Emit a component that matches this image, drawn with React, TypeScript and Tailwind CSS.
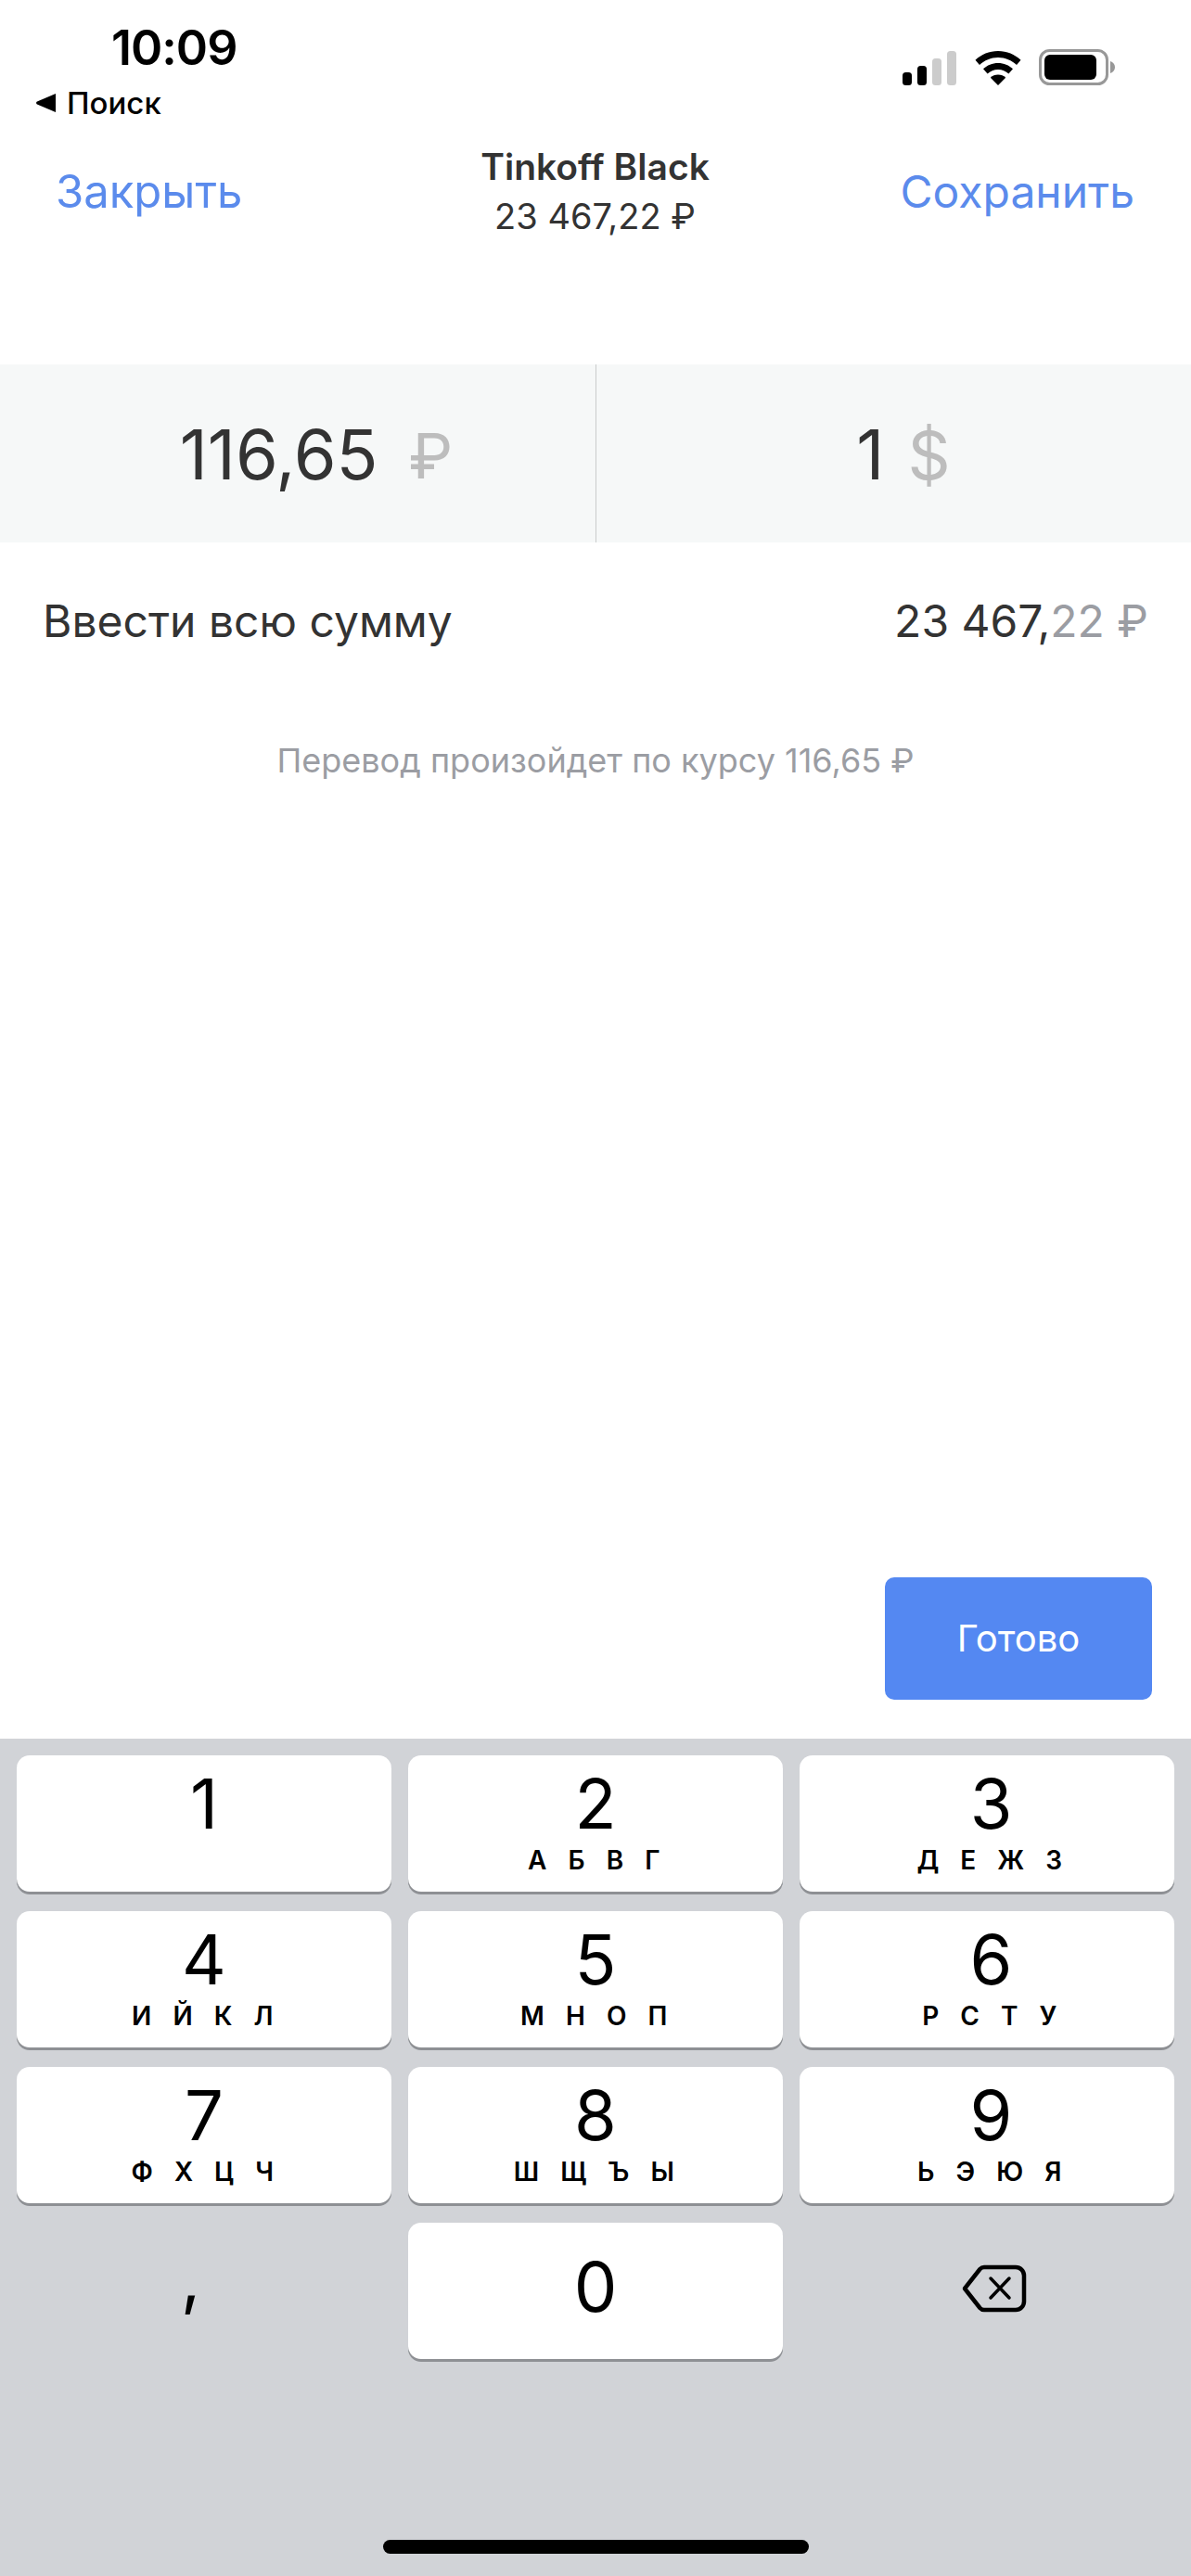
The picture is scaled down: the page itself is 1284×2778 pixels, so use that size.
const font = { fontFamily: '"Inter", "Liberation Sans", sans-serif' };

const keys: [string, string][] = [
  ["1", ""],
  ["2", "А Б В Г"],
  ["3", "Д Е Ж З"],
  ["4", "И Й К Л"],
  ["5", "М Н О П"],
  ["6", "Р С Т У"],
  ["7", "Ф Х Ц Ч"],
  ["8", "Ш Щ Ъ Ы"],
  ["9", "Ь Э Ю Я"],
];

function Key({ digit, letters, shifted, low }: { digit: string; letters?: string; shifted?: boolean; low?: boolean }) {
  return (
    <div className={`h-[147px] rounded-[14px] bg-white shadow-[0_3px_0_#8e9094] flex flex-col items-center ${shifted ? "pl-[9px]" : ""}`}>
      <div className={`${low ? "mt-[27px]" : "mt-[10px]"} h-[84px] text-[74px] leading-[84px] text-black`}>{digit}</div>
      {letters ? (
        <div className="mt-[2px] h-[34px] text-[28px] leading-[34px] font-semibold text-black whitespace-pre [word-spacing:9px] tracking-[3.5px]">
          {letters}
        </div>
      ) : null}
    </div>
  );
}

function StatusIcons() {
  return (
    <div className="flex items-end gap-[20px] h-[39px]">
      <svg width="58" height="37" viewBox="0 0 58 37">
        <rect x="0" y="23" width="10" height="14" rx="3.5" fill="#000" />
        <rect x="16" y="16" width="10" height="21" rx="3.5" fill="#000" />
        <rect x="32" y="8" width="10" height="29" rx="3.5" fill="#cccccc" />
        <rect x="48" y="0" width="10" height="37" rx="3.5" fill="#cccccc" />
      </svg>
      <svg width="50" height="37" viewBox="0 0 50 37">
        <path d="M25 0C15.5 0 7 3.6 0.5 9.8L5 15C10.3 10 17.3 7 25 7s14.7 3 20 8l4.5-5.2C43 3.6 34.5 0 25 0Z" fill="#000" />
        <path d="M25 13c-6.2 0-11.8 2.4-16 6.3l4.6 5.2C16.6 21.800 20.600 20 25 20s8.400 1.800 11.400 4.500l4.600-5.200C36.800 15.400 31.200 13 25 13Z" fill="#000" />
        <path d="M25 25.500c-3.200 0-6 1.200-8.200 3.200L25 37l8.200-8.300c-2.200-2-5-3.200-8.200-3.200Z" fill="#000" />
      </svg>
      <svg width="82" height="39" viewBox="0 0 82 39" className="ml-[-1px]">
        <rect x="1.500" y="1.500" width="72" height="36" rx="10" fill="none" stroke="#989898" strokeWidth="3" />
        <rect x="6" y="6" width="56" height="27" rx="6" fill="#000" />
        <path d="M77 13c3 1 5 3.500 5 6.500s-2 5.500-5 6.500Z" fill="#989898" />
      </svg>
    </div>
  );
}

export default function App() {
  return (
    <div style={font} className="w-[1284px] h-[2778px] bg-white flex flex-col overflow-hidden">
      {/* status bar */}
      <div className="h-[130px] flex justify-between items-start pl-[39px] pr-[82px]">
        <div className="flex flex-col">
          <div className="pl-[81px] pt-[22px] text-[52px] leading-[60px] font-semibold text-black tracking-[-1px]">10:09</div>
          <div className="flex items-center gap-[12px] mt-[11px] h-[36px]">
            <svg width="21" height="20" viewBox="0 0 21 20"><path d="M21 0v20L1 11.500a1.700 1.700 0 0 1 0-3Z" fill="#000" /></svg>
            <span className="text-[33px] leading-[36px] font-medium text-black">Поиск</span>
          </div>
        </div>
        <div className="pt-[53px]"><StatusIcons /></div>
      </div>

      {/* nav */}
      <div className="h-[263px] flex items-start pl-[60px] pr-[61px]">
        <div className="flex-1 mt-[47px] text-[49px] leading-[60px] text-[#5b8bec]">Закрыть</div>
        <div className="flex flex-col items-center mt-[26px] text-[#333333]">
          <div className="text-[39px] leading-[48px] font-semibold">Tinkoff Black</div>
          <div className="text-[38px] leading-[48px] mt-[5px]">23 467,22 ₽</div>
        </div>
        <div className="flex-1 mt-[47px] text-right text-[48px] leading-[60px] text-[#5b8bec]">Сохранить</div>
      </div>

      {/* amount panel */}
      <div className="h-[192px] bg-[#f6f8f8] flex">
        <div className="w-[643px] border-r border-[#c9cccc] flex items-center justify-center gap-[33px] pl-[40px] pt-[3px] text-[74px] text-[#333333]">
          <span>116,65</span>
          <span className="text-[#bdbdbd] text-[68px]">₽</span>
        </div>
        <div className="flex-1 flex items-center justify-center gap-[25px] pl-[21px] pt-[3px] text-[74px] text-[#333333]">
          <span>1</span>
          <span className="text-[#bdbdbd] text-[72px]">$</span>
        </div>
      </div>

      {/* total row */}
      <div className="h-[170px] flex justify-between items-center px-[46px] text-[48px] text-[#333333]">
        <span>Ввести всю сумму</span>
        <span>
          23 467,<span className="text-[#9b9da3]">22 ₽</span>
        </span>
      </div>

      <div className="mt-[43px] text-center text-[36px] leading-[44px] text-[#9b9da3]">Перевод произойдет по курсу 116,65 ₽</div>

      {/* done button */}
      <div className="flex-1 flex justify-end items-end pr-[42px] pb-[42px]">
        <div className="w-[288px] h-[132px] rounded-[10px] bg-[#5488f2] flex items-center justify-center text-[40px] text-white">Готово</div>
      </div>

      {/* keyboard */}
      <div className="h-[903px] bg-[#d1d3d7] px-[18px] pt-[18px] relative">
        <div className="grid grid-cols-3 gap-x-[18px] gap-y-[21px]">
          {keys.map(([d, l], i) => (
            <Key key={d} digit={d} letters={l} shifted={i % 3 === 2} />
          ))}
          <div className="h-[147px] flex justify-start pl-[177px] pt-[17px] text-[74px] leading-[84px] text-black">,</div>
          <Key digit="0" low />
          <div className="h-[147px] flex items-start justify-start pl-[175px] pt-[45px]">
            <svg width="70" height="52" viewBox="0 0 70 52" fill="none" stroke="#000" strokeWidth="4.500" strokeLinecap="round" strokeLinejoin="round">
              <path d="M24 3h34a9 9 0 0 1 9 9v28a9 9 0 0 1-9 9H24a6 6 0 0 1-4.500-2L3 26 19.500 5a6 6 0 0 1 4.500-2Z" />
              <path d="M31 15l20 21M51 15 31 36" strokeWidth="3.500" />
            </svg>
          </div>
        </div>
        <div className="absolute left-[413px] top-[864px] w-[459px] h-[15px] rounded-full bg-black" />
      </div>
    </div>
  );
}
